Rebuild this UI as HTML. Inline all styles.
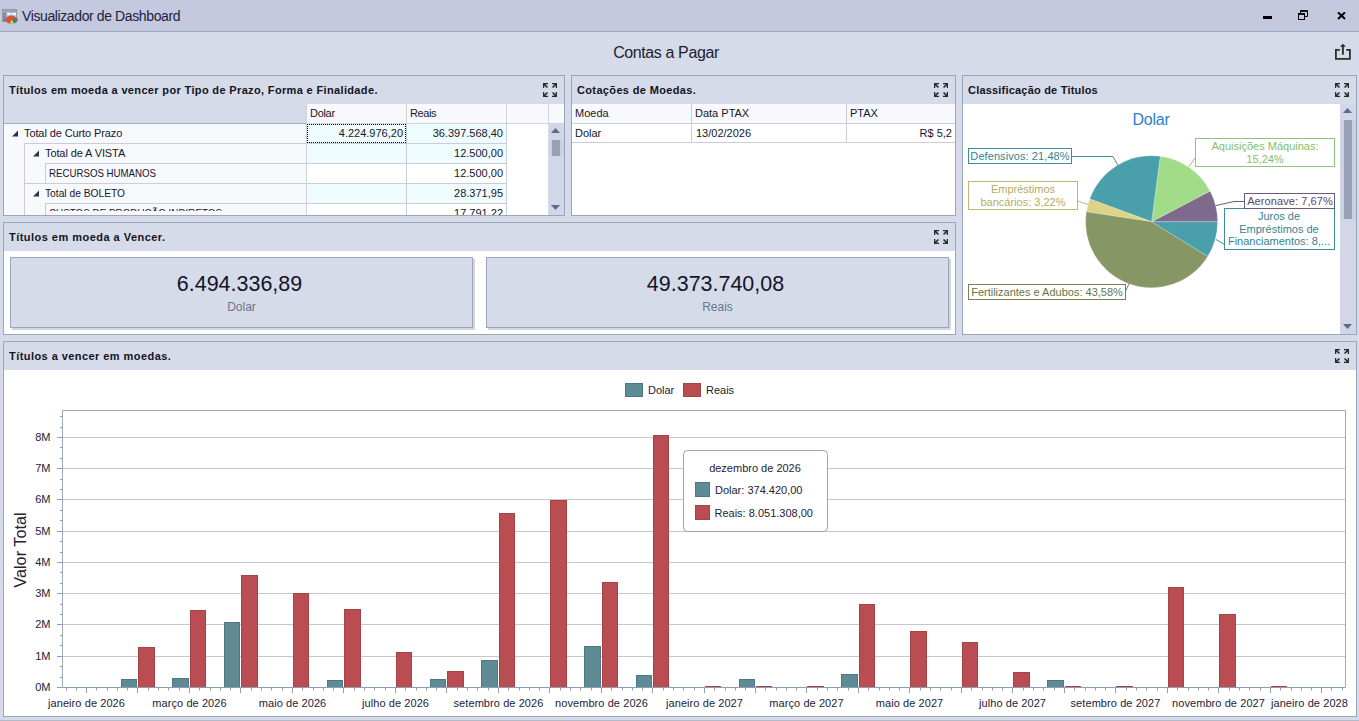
<!DOCTYPE html>
<html><head><meta charset="utf-8"><title>Visualizador de Dashboard</title>
<style>
*{box-sizing:border-box;margin:0;padding:0}
html,body{width:1359px;height:721px;overflow:hidden}
body{background:#D6DBE9;font-family:"Liberation Sans",sans-serif;font-size:11px;color:#16162C;position:relative}
.abs{position:absolute}
.t{position:absolute;white-space:nowrap;line-height:14px;height:14px}
.b{font-weight:700;letter-spacing:.35px;color:#14141E}
#titlebar{position:absolute;left:0;top:0;width:1359px;height:31px;background:#C4C9DF}
#tline{position:absolute;left:0;top:31px;width:1359px;height:1px;background:#9BA8BC}
.panel{position:absolute;border:1px solid #9CA6BA;background:#D6DBE9}
.white{position:absolute;background:#fff}
.hl{position:absolute;height:1px}
.vl{position:absolute;width:1px}
.fs{position:absolute;width:14px;height:14px}
.card{position:absolute;background:#D6DBE9;border:1px solid #9CA6BA;box-shadow:2px 2px 0 #D6D6DA}
.num{position:absolute;left:-1.7px;width:100%;text-align:center;font-size:22.3px;line-height:24px;color:#14142A;transform:scaleX(.963)}
.sub{position:absolute;left:0;width:100%;text-align:center;font-size:12px;line-height:14px;color:#6F758A}
</style></head><body>
<!-- title bar -->
<div id="titlebar"></div><div id="tline"></div>
<svg class="abs" style="left:2px;top:9px" width="16" height="15" viewBox="0 0 16 15">
<rect x="0.5" y="0.5" width="14" height="12" fill="#fff" stroke="#9A9A9A"/>
<rect x="1" y="1" width="13" height="2.4" fill="#8FA6C8"/>
<rect x="1" y="3.4" width="3.6" height="9" fill="#5F86BE"/>
<path d="M1 3.4H14M1 6.2H14M1 9H14M4.8 1V12M9.4 1V12" stroke="#9FB0CC" stroke-width=".8" fill="none"/>
<ellipse cx="9.4" cy="10.6" rx="6.2" ry="4.2" fill="#D8553A"/>
<path d="M9.4 10.6 L15.5 10 A6.2 4.2 0 0 1 12.2 14.3 Z" fill="#1E8A96"/>
<path d="M9.4 10.6 L12.2 14.3 A6.2 4.2 0 0 1 8.2 14.7 Z" fill="#E8DC3C"/>
</svg>
<div class="t" style="left:22px;top:8px;font-size:14px;line-height:16px;height:16px;letter-spacing:-.39px;color:#1E1E3C">Visualizador de Dashboard</div>
<!-- window buttons -->
<div class="abs" style="left:1263px;top:16px;width:9px;height:3px;background:#000"></div>
<svg class="abs" style="left:1298px;top:10px" width="10" height="10" viewBox="0 0 10 10"><path d="M2.5 3V.5H9.5V6.5H7" fill="none" stroke="#000" stroke-width="1"/><path d="M2.5 1.2H9.5" stroke="#000" stroke-width="1.4"/><rect x=".5" y="3.5" width="6" height="6" fill="none" stroke="#000"/><path d="M.5 4.2H6.5" stroke="#000" stroke-width="1.4"/></svg>
<svg class="abs" style="left:1337px;top:12px" width="9" height="8" viewBox="0 0 9 8"><path d="M1 .3L8 7M8 .3L1 7" stroke="#000" stroke-width="2" fill="none"/></svg>
<!-- dashboard title -->
<div class="t" style="left:466px;width:400px;text-align:center;top:44px;font-size:16px;line-height:18px;height:18px;letter-spacing:-.39px;color:#1E1E32">Contas a Pagar</div>
<svg class="abs" style="left:1335px;top:43px" width="16" height="18" viewBox="0 0 16 18"><path d="M4.8 6.9H.9V15.85H14.9V6.9H11.2" fill="none" stroke="#2E2E2E" stroke-width="1.8"/><path d="M7.9 3V11.7" stroke="#2E2E2E" stroke-width="1.9"/><path d="M7.9 .7L10.9 3.8H4.9Z" fill="#2E2E2E"/></svg>
<!-- PANEL 1 : pivot -->
<div class="panel" style="left:3px;top:75px;width:562px;height:141px"></div>
<div class="t b" style="left:9px;top:83px">Títulos em moeda a vencer por Tipo de Prazo, Forma e Finalidade.</div>
<svg class="fs" style="left:543px;top:83px" viewBox="0 0 14 14"><g fill="#2B2B2B"><path d="M0 0H5V1.3H2.4L5 3.9L3.9 5L1.3 2.4V5H0Z"/><path d="M14 0H9V1.3H11.6L9 3.9L10.1 5L12.7 2.4V5H14Z"/><path d="M0 14H5V12.7H2.4L5 10.1L3.9 9L1.3 11.6V9H0Z"/><path d="M14 14H9V12.7H11.6L9 10.1L10.1 9L12.7 11.6V9H14Z"/></g></svg>
<!-- header cells -->
<div class="abs" style="left:307px;top:104px;width:257px;height:19px;background:#F8F9FC"></div>
<div class="vl" style="left:306px;top:104px;height:111px;background:#CFD3E0"></div>
<div class="vl" style="left:406px;top:104px;height:111px;background:#CFD3E0"></div>
<div class="vl" style="left:506px;top:104px;height:111px;background:#CFD3E0"></div>
<div class="vl" style="left:548px;top:104px;height:19px;background:#CFD3E0"></div>
<div class="t" style="left:310px;top:106px;letter-spacing:-.3px">Dolar</div>
<div class="t" style="left:410px;top:106px;letter-spacing:-.4px">Reais</div>
<!-- row header area -->
<div class="abs" style="left:4px;top:124px;width:302px;height:91px;background:#F8F9FC"></div>
<div class="hl" style="left:4px;top:123px;width:302px;background:#A2ACC0"></div>
<div class="hl" style="left:307px;top:123px;width:257px;background:#CFD3E0"></div>
<!-- data cells -->
<div class="abs" style="left:307px;top:124px;width:199px;height:19px;background:#EFFCFE"></div>
<div class="abs" style="left:307px;top:144px;width:199px;height:19px;background:#EFFCFE"></div>
<div class="abs" style="left:307px;top:164px;width:199px;height:19px;background:#fff"></div>
<div class="abs" style="left:307px;top:184px;width:199px;height:19px;background:#EFFCFE"></div>
<div class="abs" style="left:307px;top:204px;width:199px;height:11px;background:#fff"></div>
<div class="abs" style="left:507px;top:124px;width:41px;height:91px;background:#fff"></div>
<div class="vl" style="left:406px;top:124px;height:91px;background:#C9CCDA"></div>
<div class="vl" style="left:506px;top:124px;height:91px;background:#C9CCDA"></div>
<div class="hl" style="left:307px;top:143px;width:200px;background:#C9CCDA"></div>
<div class="hl" style="left:307px;top:163px;width:200px;background:#C9CCDA"></div>
<div class="hl" style="left:307px;top:183px;width:200px;background:#C9CCDA"></div>
<div class="hl" style="left:307px;top:203px;width:200px;background:#C9CCDA"></div>
<!-- row header tree lines -->
<div class="hl" style="left:24px;top:143px;width:282px;background:#C9CCDA"></div>
<div class="vl" style="left:24px;top:143px;height:72px;background:#C9CCDA"></div>
<div class="hl" style="left:45px;top:163px;width:261px;background:#C9CCDA"></div>
<div class="vl" style="left:45px;top:163px;height:20px;background:#C9CCDA"></div>
<div class="hl" style="left:24px;top:183px;width:282px;background:#C9CCDA"></div>
<div class="hl" style="left:45px;top:203px;width:261px;background:#C9CCDA"></div>
<div class="vl" style="left:45px;top:203px;height:12px;background:#C9CCDA"></div>
<!-- glyphs -->
<svg class="abs" style="left:12px;top:130px" width="6" height="7" viewBox="0 0 6 7"><path d="M6 .4V6.6H-.2Z" fill="#27334D"/></svg>
<svg class="abs" style="left:33px;top:150px" width="6" height="7" viewBox="0 0 6 7"><path d="M6 .4V6.6H-.2Z" fill="#27334D"/></svg>
<svg class="abs" style="left:33px;top:190px" width="6" height="7" viewBox="0 0 6 7"><path d="M6 .4V6.6H-.2Z" fill="#27334D"/></svg>
<div class="t" style="left:24px;top:126px;letter-spacing:-.1px">Total de Curto Prazo</div>
<div class="t" style="left:45px;top:146px;letter-spacing:-.1px">Total de A VISTA</div>
<div class="t" style="left:49px;top:166px;transform:scaleX(.88);transform-origin:0 0">RECURSOS HUMANOS</div>
<div class="t" style="left:45px;top:186px;transform:scaleX(.93);transform-origin:0 0">Total de BOLETO</div>
<div class="abs" style="left:49px;top:205px;width:250px;height:6px;overflow:hidden"><div class="t" style="left:0;top:1px;transform:scaleX(.895);transform-origin:0 0">CUSTOS DE PRODUÇÃO INDIRETOS</div></div>
<!-- values -->
<div class="t" style="left:307px;width:96px;text-align:right;top:126px">4.224.976,20</div>
<div class="t" style="left:407px;width:96px;text-align:right;top:126px">36.397.568,40</div>
<div class="t" style="left:407px;width:96px;text-align:right;top:146px">12.500,00</div>
<div class="t" style="left:407px;width:96px;text-align:right;top:166px">12.500,00</div>
<div class="t" style="left:407px;width:96px;text-align:right;top:186px">28.371,95</div>
<div class="abs" style="left:407px;top:206px;width:96px;height:9px;overflow:hidden"><div class="t" style="right:0;top:0">17.791,22</div></div>
<!-- focus rect -->
<div class="abs" style="left:307px;top:124px;width:99px;height:19px;border:1px dotted #000"></div>
<!-- scrollbar -->
<div class="abs" style="left:549px;top:124px;width:15px;height:91px;background:#D1D7E7"></div>
<svg class="abs" style="left:551px;top:128px" width="9" height="5" viewBox="0 0 9 5"><path d="M0 5L4.5 0L9 5Z" fill="#5A6B8C"/></svg>
<div class="abs" style="left:549px;top:140px;width:15px;height:16px;background:#CBD1E1"></div><div class="abs" style="left:552px;top:140px;width:8px;height:16px;background:#97A2B9"></div>
<svg class="abs" style="left:551px;top:205px" width="9" height="5" viewBox="0 0 9 5"><path d="M0 0L4.5 5L9 0Z" fill="#5A6B8C"/></svg>

<!-- PANEL 2 : grid -->
<div class="panel" style="left:571px;top:75px;width:385px;height:141px"></div>
<div class="t b" style="left:577px;top:83px">Cotações de Moedas.</div>
<svg class="fs" style="left:934px;top:83px" viewBox="0 0 14 14"><g fill="#2B2B2B"><path d="M0 0H5V1.3H2.4L5 3.9L3.9 5L1.3 2.4V5H0Z"/><path d="M14 0H9V1.3H11.6L9 3.9L10.1 5L12.7 2.4V5H14Z"/><path d="M0 14H5V12.7H2.4L5 10.1L3.9 9L1.3 11.6V9H0Z"/><path d="M14 14H9V12.7H11.6L9 10.1L10.1 9L12.7 11.6V9H14Z"/></g></svg>
<div class="abs" style="left:572px;top:104px;width:383px;height:111px;background:#fff"></div>
<div class="abs" style="left:572px;top:104px;width:383px;height:19px;background:#F8F9FC"></div>
<div class="hl" style="left:572px;top:123px;width:383px;background:#C9CCDA"></div>
<div class="hl" style="left:572px;top:142px;width:383px;background:#C9CCDA"></div>
<div class="vl" style="left:691px;top:104px;height:39px;background:#C9CCDA"></div>
<div class="vl" style="left:846px;top:104px;height:39px;background:#C9CCDA"></div>
<div class="t" style="left:575px;top:106px">Moeda</div>
<div class="t" style="left:695px;top:106px">Data PTAX</div>
<div class="t" style="left:850px;top:106px">PTAX</div>
<div class="t" style="left:575px;top:126px">Dolar</div>
<div class="t" style="left:696px;top:126px">13/02/2026</div>
<div class="t" style="left:852px;width:100px;text-align:right;top:126px">R$ 5,2</div>

<!-- PANEL 4 : cards -->
<div class="panel" style="left:3px;top:222px;width:953px;height:113px"></div>
<div class="t b" style="left:9px;top:230px;letter-spacing:.47px">Títulos em moeda a Vencer.</div>
<svg class="fs" style="left:934px;top:230px" viewBox="0 0 14 14"><g fill="#2B2B2B"><path d="M0 0H5V1.3H2.4L5 3.9L3.9 5L1.3 2.4V5H0Z"/><path d="M14 0H9V1.3H11.6L9 3.9L10.1 5L12.7 2.4V5H14Z"/><path d="M0 14H5V12.7H2.4L5 10.1L3.9 9L1.3 11.6V9H0Z"/><path d="M14 14H9V12.7H11.6L9 10.1L10.1 9L12.7 11.6V9H14Z"/></g></svg>
<div class="white" style="left:4px;top:251px;width:951px;height:83px"></div>
<div class="card" style="left:10px;top:257px;width:463px;height:71px"><div class="num" style="top:13.5px">6.494.336,89</div><div class="sub" style="top:42px">Dolar</div></div>
<div class="card" style="left:486px;top:257px;width:463px;height:71px"><div class="num" style="top:13.5px">49.373.740,08</div><div class="sub" style="top:42px">Reais</div></div>
<!-- PANEL 3 : pie -->
<div class="panel" style="left:962px;top:75px;width:395px;height:260px"></div>
<div class="t b" style="left:968px;top:83px;letter-spacing:.2px">Classificação de Titulos</div>
<svg class="fs" style="left:1335px;top:83px" viewBox="0 0 14 14"><g fill="#2B2B2B"><path d="M0 0H5V1.3H2.4L5 3.9L3.9 5L1.3 2.4V5H0Z"/><path d="M14 0H9V1.3H11.6L9 3.9L10.1 5L12.7 2.4V5H14Z"/><path d="M0 14H5V12.7H2.4L5 10.1L3.9 9L1.3 11.6V9H0Z"/><path d="M14 14H9V12.7H11.6L9 10.1L10.1 9L12.7 11.6V9H14Z"/></g></svg>
<div class="white" style="left:963px;top:104px;width:377px;height:230px"></div>
<div class="abs" style="left:1340px;top:104px;width:16px;height:230px;background:#D1D7E7"></div>
<svg class="abs" style="left:1343px;top:108px" width="9" height="5" viewBox="0 0 9 5"><path d="M0 5L4.5 0L9 5Z" fill="#5A6B8C"/></svg>
<div class="abs" style="left:1341px;top:120px;width:15px;height:99px;background:#CBD1E1"></div><div class="abs" style="left:1344px;top:120px;width:8px;height:99px;background:#97A2B9"></div>
<svg class="abs" style="left:1343px;top:324px" width="9" height="5" viewBox="0 0 9 5"><path d="M0 0L4.5 5L9 0Z" fill="#5A6B8C"/></svg>
<svg class="abs" style="left:963px;top:104px" width="377" height="230" viewBox="0 0 377 230" font-family="Liberation Sans, sans-serif" font-size="11">
<path d="M188.60 117.70L254.60 117.70A66 66 0 0 0 247.08 87.11Z" fill="#7F6A8E" stroke="#fff" stroke-opacity=".35" stroke-width=".6"/>
<path d="M188.60 117.70L247.08 87.11A66 66 0 0 0 197.24 52.27Z" fill="#A2DC88" stroke="#fff" stroke-opacity=".35" stroke-width=".6"/>
<path d="M188.60 117.70L197.24 52.27A66 66 0 0 0 126.66 94.91Z" fill="#4AA0AA" stroke="#fff" stroke-opacity=".35" stroke-width=".6"/>
<path d="M188.60 117.70L126.66 94.91A66 66 0 0 0 123.34 107.83Z" fill="#DCD484" stroke="#fff" stroke-opacity=".35" stroke-width=".6"/>
<path d="M188.60 117.70L123.34 107.83A66 66 0 0 0 244.74 152.40Z" fill="#869664" stroke="#fff" stroke-opacity=".35" stroke-width=".6"/>
<path d="M188.60 117.70L244.74 152.40A66 66 0 0 0 254.60 117.70Z" fill="#4AA0AA" stroke="#fff" stroke-opacity=".35" stroke-width=".6"/>
<path d="M108.5 52.5L150.0 52.5L155.0 61.5" fill="none" stroke="#3D8E9A"/>
<path d="M114.5 97.0L125.0 100.5" fill="none" stroke="#C2B76C"/>
<path d="M162.5 187.5L166.0 179.5" fill="none" stroke="#74835A"/>
<path d="M232.0 54.0L226.0 62.5" fill="none" stroke="#90C476"/>
<path d="M281.0 97.5L271.0 97.5L253.0 101.5" fill="none" stroke="#6E597C"/>
<path d="M261.0 140.0L253.0 135.5" fill="none" stroke="#3D8E9A"/>
<rect x="5.5" y="44.5" width="103.0" height="15.0" fill="#fff" stroke="#3D8E9A"/>
<text x="57.0" y="55.5" fill="#35838F" text-anchor="middle" letter-spacing=".08">Defensivos: 21,48%</text>
<rect x="5.5" y="77.5" width="109.0" height="28.0" fill="#fff" stroke="#C2B76C"/>
<text x="60.0" y="88.5" fill="#B4AC62" text-anchor="middle" >Empréstimos</text>
<text x="60.0" y="101.5" fill="#B4AC62" text-anchor="middle" >bancários: 3,22%</text>
<rect x="5.5" y="180.5" width="157.0" height="15.0" fill="#fff" stroke="#74835A"/>
<text x="84.0" y="191.5" fill="#66744A" text-anchor="middle" >Fertilizantes e Adubos: 43,58%</text>
<rect x="232.5" y="34.5" width="139.0" height="28.0" fill="#fff" stroke="#90C476"/>
<text x="302.0" y="45.5" fill="#86BE6A" text-anchor="middle" >Aquisições Máquinas:</text>
<text x="302.0" y="58.5" fill="#86BE6A" text-anchor="middle" >15,24%</text>
<rect x="261.5" y="104.5" width="110.0" height="41.0" fill="#fff" stroke="#3D8E9A"/>
<text x="316.0" y="116.0" fill="#35838F" text-anchor="middle" >Juros de</text>
<text x="316.0" y="128.5" fill="#35838F" text-anchor="middle" >Empréstimos de</text>
<text x="316.0" y="141.0" fill="#35838F" text-anchor="middle" >Financiamentos: 8,...</text>
<rect x="281.5" y="89.5" width="90.0" height="15.0" fill="#fff" stroke="#6E597C"/>
<text x="327.0" y="101.0" fill="#5A4668" text-anchor="middle" letter-spacing=".08">Aeronave: 7,67%</text>
<text x="188" y="20.5" fill="#2B7FCB" text-anchor="middle" font-size="16" letter-spacing="-.2">Dolar</text>
</svg>
<!-- PANEL 5 : bar chart -->
<div class="panel" style="left:3px;top:341px;width:1354px;height:376px"></div>
<div class="t b" style="left:9px;top:349px;letter-spacing:.44px">Títulos a vencer em moedas.</div>
<svg class="fs" style="left:1335px;top:349px" viewBox="0 0 14 14"><g fill="#2B2B2B"><path d="M0 0H5V1.3H2.4L5 3.9L3.9 5L1.3 2.4V5H0Z"/><path d="M14 0H9V1.3H11.6L9 3.9L10.1 5L12.7 2.4V5H14Z"/><path d="M0 14H5V12.7H2.4L5 10.1L3.9 9L1.3 11.6V9H0Z"/><path d="M14 14H9V12.7H11.6L9 10.1L10.1 9L12.7 11.6V9H14Z"/></g></svg>
<div class="white" style="left:4px;top:370px;width:1352px;height:346px"></div>
<svg class="abs" style="left:4px;top:370px" width="1352" height="347" viewBox="0 0 1352 347" font-family="Liberation Sans, sans-serif" font-size="11" fill="#232336">
<path d="M58.5 286.5H1341.5" stroke="#C8C8C8" stroke-width="1"/>
<path d="M58.5 254.5H1341.5" stroke="#C8C8C8" stroke-width="1"/>
<path d="M58.5 223.5H1341.5" stroke="#C8C8C8" stroke-width="1"/>
<path d="M58.5 192.5H1341.5" stroke="#C8C8C8" stroke-width="1"/>
<path d="M58.5 161.5H1341.5" stroke="#C8C8C8" stroke-width="1"/>
<path d="M58.5 129.5H1341.5" stroke="#C8C8C8" stroke-width="1"/>
<path d="M58.5 98.5H1341.5" stroke="#C8C8C8" stroke-width="1"/>
<path d="M58.5 67.5H1341.5" stroke="#C8C8C8" stroke-width="1"/>
<rect x="117.5" y="309.5" width="15" height="8" fill="#5F8B95" stroke="#4F7883"/>
<rect x="134.5" y="277.5" width="16" height="40" fill="#BA4D51" stroke="#A64347"/>
<rect x="168.5" y="308.5" width="16" height="9" fill="#5F8B95" stroke="#4F7883"/>
<rect x="186.5" y="240.5" width="15" height="77" fill="#BA4D51" stroke="#A64347"/>
<rect x="220.5" y="252.5" width="15" height="65" fill="#5F8B95" stroke="#4F7883"/>
<rect x="237.5" y="205.5" width="16" height="112" fill="#BA4D51" stroke="#A64347"/>
<rect x="289.5" y="223.5" width="15" height="94" fill="#BA4D51" stroke="#A64347"/>
<rect x="323.5" y="310.5" width="15" height="7" fill="#5F8B95" stroke="#4F7883"/>
<rect x="340.5" y="239.5" width="16" height="78" fill="#BA4D51" stroke="#A64347"/>
<rect x="392.5" y="282.5" width="15" height="35" fill="#BA4D51" stroke="#A64347"/>
<rect x="426.5" y="309.5" width="15" height="8" fill="#5F8B95" stroke="#4F7883"/>
<rect x="443.5" y="301.5" width="16" height="16" fill="#BA4D51" stroke="#A64347"/>
<rect x="477.5" y="290.5" width="16" height="27" fill="#5F8B95" stroke="#4F7883"/>
<rect x="495.5" y="143.5" width="15" height="174" fill="#BA4D51" stroke="#A64347"/>
<rect x="546.5" y="130.5" width="16" height="187" fill="#BA4D51" stroke="#A64347"/>
<rect x="580.5" y="276.5" width="16" height="41" fill="#5F8B95" stroke="#4F7883"/>
<rect x="598.5" y="212.5" width="15" height="105" fill="#BA4D51" stroke="#A64347"/>
<rect x="632.5" y="305.5" width="15" height="12" fill="#5F8B95" stroke="#4F7883"/>
<rect x="649.5" y="65.5" width="15" height="252" fill="#BA4D51" stroke="#A64347"/>
<rect x="701.5" y="316.5" width="15" height="1" fill="#BA4D51" stroke="#A64347"/>
<rect x="735.5" y="309.5" width="15" height="8" fill="#5F8B95" stroke="#4F7883"/>
<rect x="752.5" y="316.5" width="15" height="1" fill="#BA4D51" stroke="#A64347"/>
<rect x="803.5" y="316.5" width="16" height="1" fill="#BA4D51" stroke="#A64347"/>
<rect x="837.5" y="304.5" width="16" height="13" fill="#5F8B95" stroke="#4F7883"/>
<rect x="855.5" y="234.5" width="15" height="83" fill="#BA4D51" stroke="#A64347"/>
<rect x="906.5" y="261.5" width="16" height="56" fill="#BA4D51" stroke="#A64347"/>
<rect x="958.5" y="272.5" width="15" height="45" fill="#BA4D51" stroke="#A64347"/>
<rect x="1009.5" y="302.5" width="16" height="15" fill="#BA4D51" stroke="#A64347"/>
<rect x="1043.5" y="310.5" width="16" height="7" fill="#5F8B95" stroke="#4F7883"/>
<rect x="1061.5" y="316.5" width="15" height="1" fill="#BA4D51" stroke="#A64347"/>
<rect x="1112.5" y="316.5" width="16" height="1" fill="#BA4D51" stroke="#A64347"/>
<rect x="1164.5" y="217.5" width="15" height="100" fill="#BA4D51" stroke="#A64347"/>
<rect x="1215.5" y="244.5" width="16" height="73" fill="#BA4D51" stroke="#A64347"/>
<rect x="1267.5" y="316.5" width="15" height="1" fill="#BA4D51" stroke="#A64347"/>
<path d="M58.5 317.5V40.5H1341.5V317.5" fill="none" stroke="#9EAABE"/>
<path d="M58.5 317.5H1341.5" fill="none" stroke="#8F9DB4"/>
<path d="M53.0 317.5H58.5M56.0 307.5H58.5M56.0 296.5H58.5M53.0 286.5H58.5M56.0 275.5H58.5M56.0 265.5H58.5M53.0 254.5H58.5M56.0 244.5H58.5M56.0 234.5H58.5M53.0 223.5H58.5M56.0 213.5H58.5M56.0 202.5H58.5M53.0 192.5H58.5M56.0 182.5H58.5M56.0 171.5H58.5M53.0 161.5H58.5M56.0 150.5H58.5M56.0 140.5H58.5M53.0 129.5H58.5M56.0 119.5H58.5M56.0 109.5H58.5M53.0 98.5H58.5M56.0 88.5H58.5M56.0 77.5H58.5M53.0 67.5H58.5M56.0 57.5H58.5M56.0 46.5H58.5" stroke="#8F9DB4" fill="none"/>
<text x="46.5" y="321.0" text-anchor="end">0M</text>
<text x="46.5" y="290.0" text-anchor="end">1M</text>
<text x="46.5" y="258.0" text-anchor="end">2M</text>
<text x="46.5" y="227.0" text-anchor="end">3M</text>
<text x="46.5" y="196.0" text-anchor="end">4M</text>
<text x="46.5" y="165.0" text-anchor="end">5M</text>
<text x="46.5" y="133.0" text-anchor="end">6M</text>
<text x="46.5" y="102.0" text-anchor="end">7M</text>
<text x="46.5" y="71.0" text-anchor="end">8M</text>
<path d="M62.5 317.5V320.5M72.5 317.5V320.5M82.5 317.5V323.0M92.5 317.5V320.5M103.5 317.5V320.5M113.5 317.5V320.5M123.5 317.5V320.5M133.5 317.5V323.0M144.5 317.5V320.5M154.5 317.5V320.5M164.5 317.5V320.5M175.5 317.5V320.5M185.5 317.5V323.0M195.5 317.5V320.5M206.5 317.5V320.5M216.5 317.5V320.5M226.5 317.5V320.5M236.5 317.5V323.0M247.5 317.5V320.5M257.5 317.5V320.5M267.5 317.5V320.5M278.5 317.5V320.5M288.5 317.5V323.0M298.5 317.5V320.5M309.5 317.5V320.5M319.5 317.5V320.5M329.5 317.5V320.5M339.5 317.5V323.0M350.5 317.5V320.5M360.5 317.5V320.5M370.5 317.5V320.5M381.5 317.5V320.5M391.5 317.5V323.0M401.5 317.5V320.5M412.5 317.5V320.5M422.5 317.5V320.5M432.5 317.5V320.5M442.5 317.5V323.0M453.5 317.5V320.5M463.5 317.5V320.5M473.5 317.5V320.5M484.5 317.5V320.5M494.5 317.5V323.0M504.5 317.5V320.5M515.5 317.5V320.5M525.5 317.5V320.5M535.5 317.5V320.5M545.5 317.5V323.0M556.5 317.5V320.5M566.5 317.5V320.5M576.5 317.5V320.5M587.5 317.5V320.5M597.5 317.5V323.0M607.5 317.5V320.5M618.5 317.5V320.5M628.5 317.5V320.5M638.5 317.5V320.5M648.5 317.5V323.0M659.5 317.5V320.5M669.5 317.5V320.5M679.5 317.5V320.5M690.5 317.5V320.5M700.5 317.5V323.0M710.5 317.5V320.5M721.5 317.5V320.5M731.5 317.5V320.5M741.5 317.5V320.5M751.5 317.5V323.0M761.5 317.5V320.5M772.5 317.5V320.5M782.5 317.5V320.5M792.5 317.5V320.5M802.5 317.5V323.0M813.5 317.5V320.5M823.5 317.5V320.5M833.5 317.5V320.5M844.5 317.5V320.5M854.5 317.5V323.0M864.5 317.5V320.5M875.5 317.5V320.5M885.5 317.5V320.5M895.5 317.5V320.5M905.5 317.5V323.0M916.5 317.5V320.5M926.5 317.5V320.5M936.5 317.5V320.5M947.5 317.5V320.5M957.5 317.5V323.0M967.5 317.5V320.5M978.5 317.5V320.5M988.5 317.5V320.5M998.5 317.5V320.5M1008.5 317.5V323.0M1019.5 317.5V320.5M1029.5 317.5V320.5M1039.5 317.5V320.5M1050.5 317.5V320.5M1060.5 317.5V323.0M1070.5 317.5V320.5M1081.5 317.5V320.5M1091.5 317.5V320.5M1101.5 317.5V320.5M1111.5 317.5V323.0M1122.5 317.5V320.5M1132.5 317.5V320.5M1142.5 317.5V320.5M1153.5 317.5V320.5M1163.5 317.5V323.0M1173.5 317.5V320.5M1184.5 317.5V320.5M1194.5 317.5V320.5M1204.5 317.5V320.5M1214.5 317.5V323.0M1225.5 317.5V320.5M1235.5 317.5V320.5M1245.5 317.5V320.5M1256.5 317.5V320.5M1266.5 317.5V323.0M1276.5 317.5V320.5M1287.5 317.5V320.5M1297.5 317.5V320.5M1307.5 317.5V320.5M1317.5 317.5V323.0M1327.5 317.5V320.5M1338.5 317.5V320.5" stroke="#8F9DB4" fill="none"/>
<text x="82.5" y="337.0" text-anchor="middle" letter-spacing=".08">janeiro de 2026</text>
<text x="185.5" y="337.0" text-anchor="middle" letter-spacing=".08">março de 2026</text>
<text x="288.5" y="337.0" text-anchor="middle" letter-spacing=".08">maio de 2026</text>
<text x="391.5" y="337.0" text-anchor="middle" letter-spacing=".08">julho de 2026</text>
<text x="494.5" y="337.0" text-anchor="middle" letter-spacing=".08">setembro de 2026</text>
<text x="597.5" y="337.0" text-anchor="middle" letter-spacing=".08">novembro de 2026</text>
<text x="700.5" y="337.0" text-anchor="middle" letter-spacing=".08">janeiro de 2027</text>
<text x="802.5" y="337.0" text-anchor="middle" letter-spacing=".08">março de 2027</text>
<text x="905.5" y="337.0" text-anchor="middle" letter-spacing=".08">maio de 2027</text>
<text x="1008.5" y="337.0" text-anchor="middle" letter-spacing=".08">julho de 2027</text>
<text x="1111.5" y="337.0" text-anchor="middle" letter-spacing=".08">setembro de 2027</text>
<text x="1214.5" y="337.0" text-anchor="middle" letter-spacing=".08">novembro de 2027</text>
<text x="1344.0" y="337.0" text-anchor="end" letter-spacing=".08">janeiro de 2028</text>
<text transform="translate(21.5 180.0) rotate(-90)" text-anchor="middle" font-size="16.3">Valor Total</text>
<rect x="621.5" y="13.5" width="17" height="13" fill="#5F8B95" stroke="#4F7883"/>
<text x="644.0" y="24.0">Dolar</text>
<rect x="679.5" y="13.5" width="17" height="13" fill="#BA4D51" stroke="#A64347"/>
<text x="702.0" y="24.0">Reais</text>
<rect x="679.5" y="80.5" width="144" height="81" rx="4" ry="4" fill="#fff" stroke="#94A3BE"/>
<text x="751.0" y="102.0" text-anchor="middle">dezembro de 2026</text>
<rect x="691.5" y="112.5" width="14" height="14" fill="#5F8B95" stroke="#4F7883"/>
<text x="711.0" y="123.8">Dolar: 374.420,00</text>
<rect x="691.5" y="135.5" width="14" height="14" fill="#BA4D51" stroke="#A64347"/>
<text x="710.5" y="146.8">Reais: 8.051.308,00</text>
</svg>
<div class="abs" style="left:0;top:720px;width:1359px;height:1px;background:#B4BAC8"></div>
</body></html>
